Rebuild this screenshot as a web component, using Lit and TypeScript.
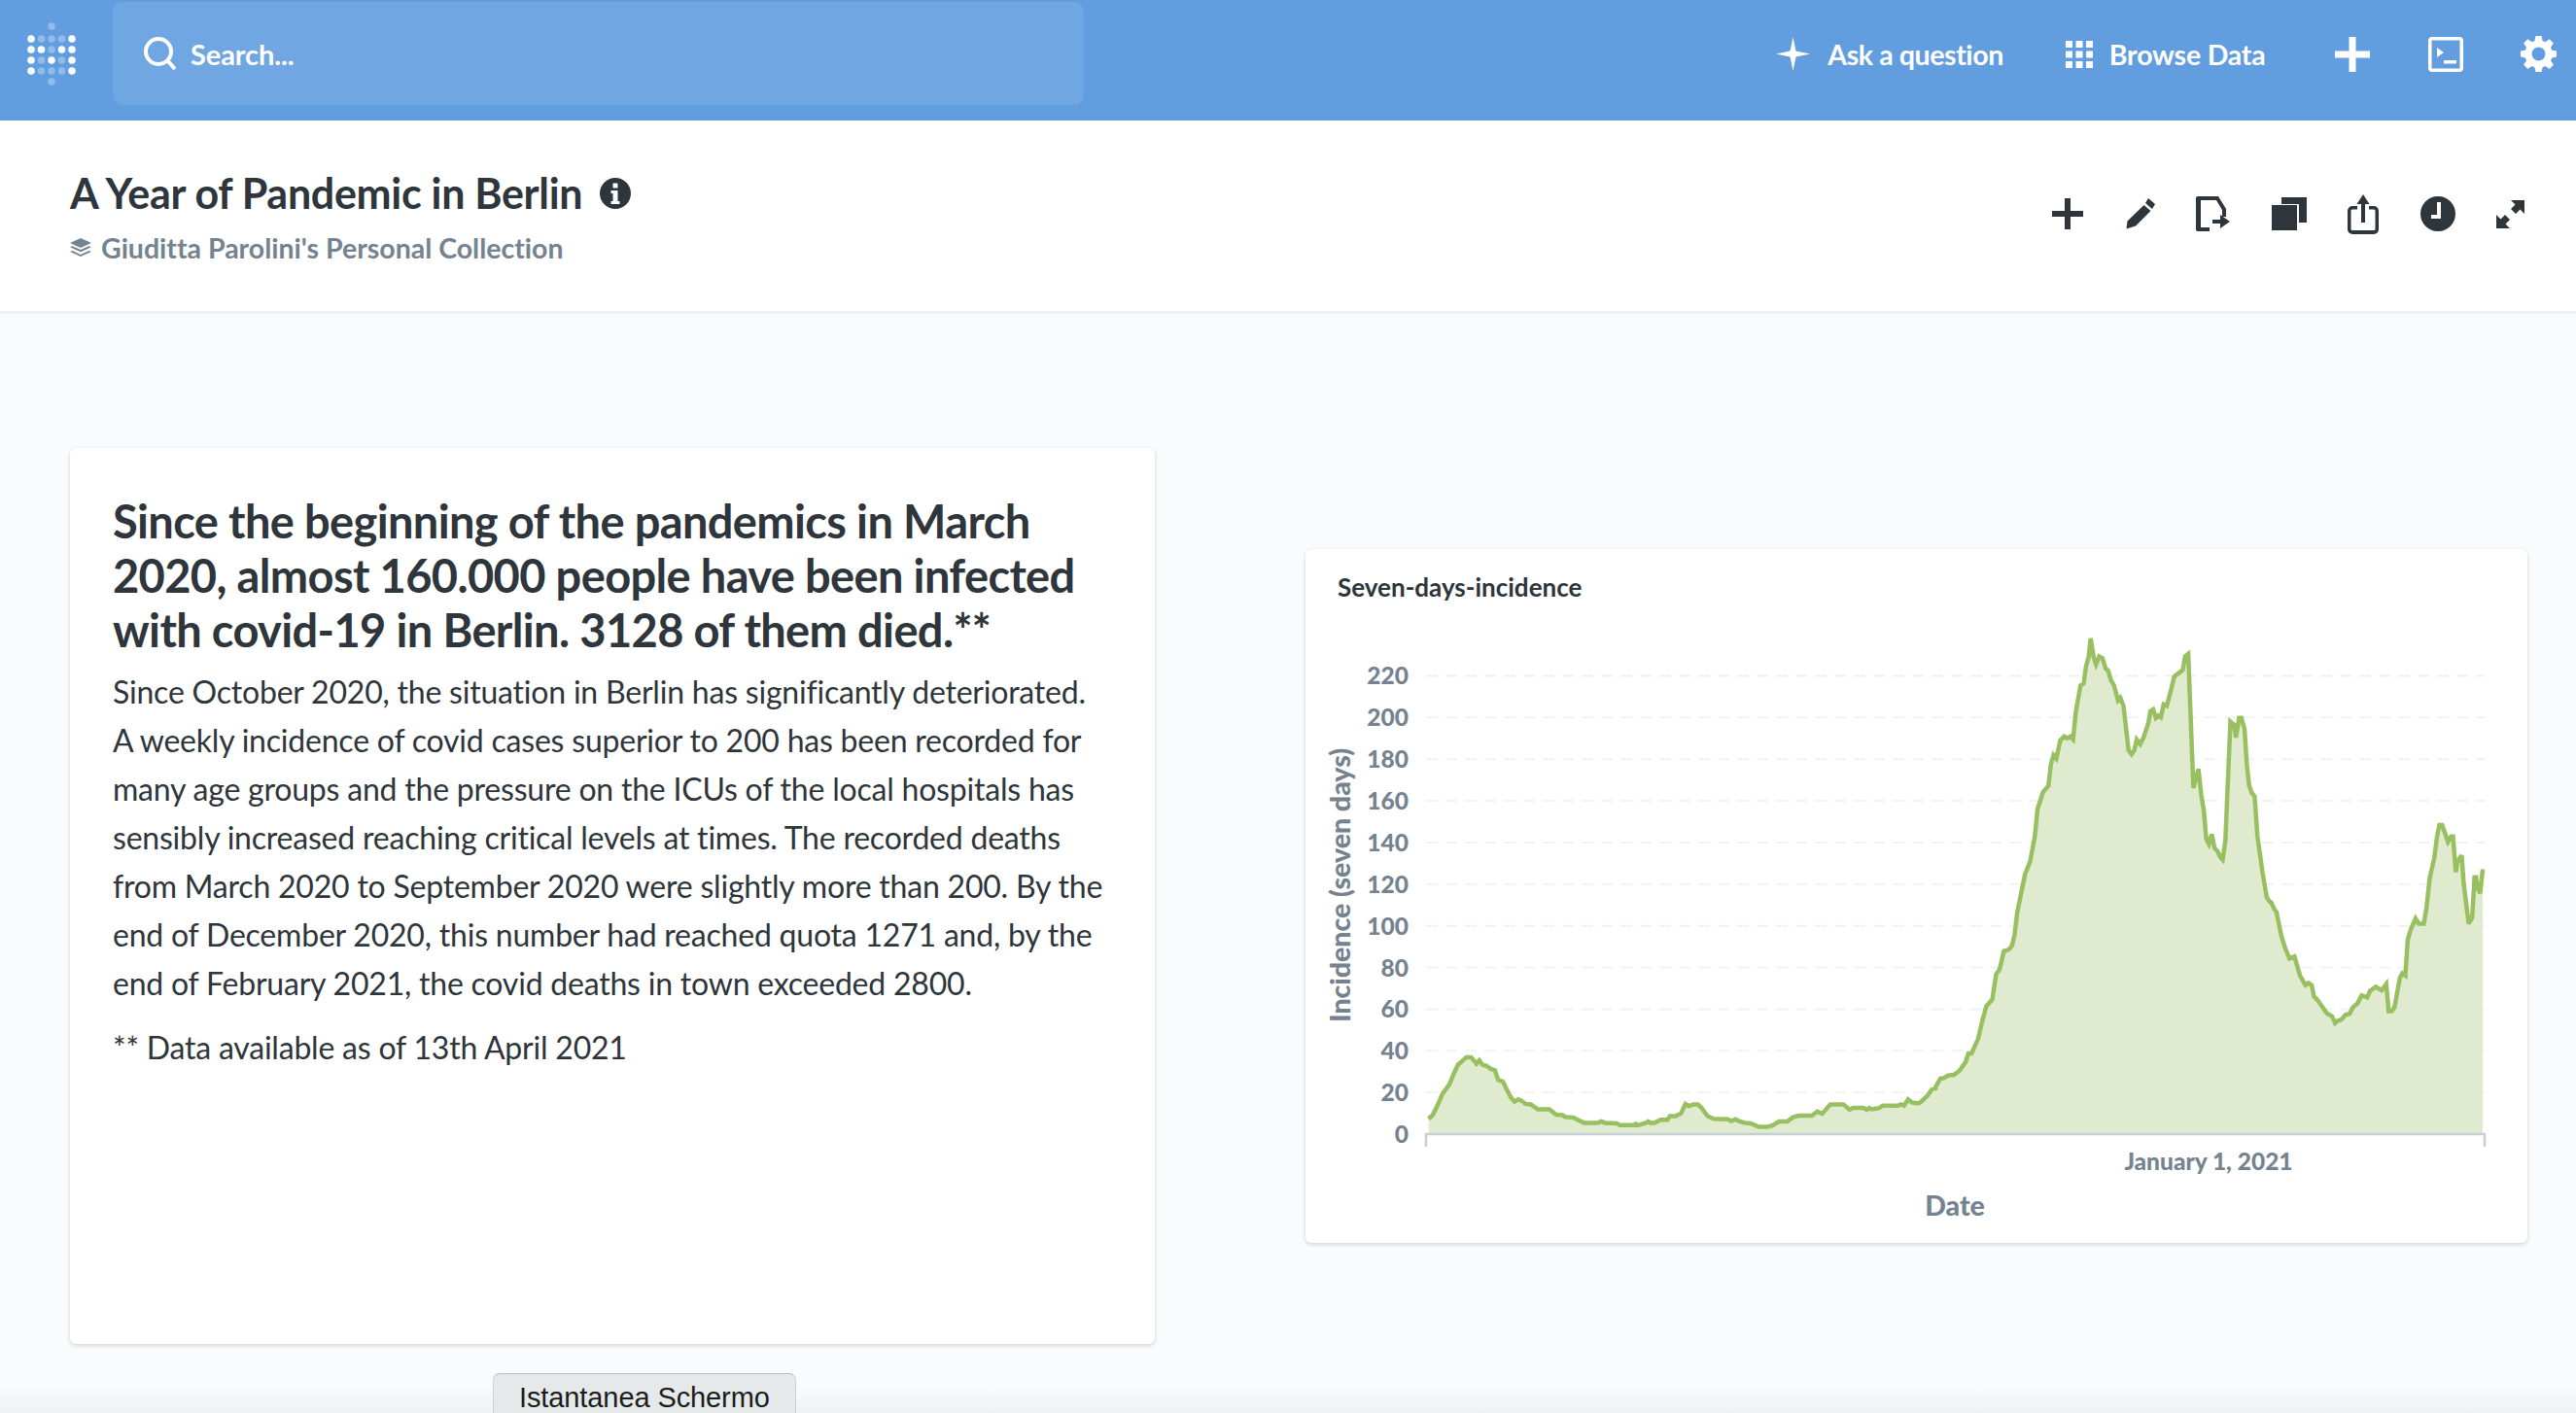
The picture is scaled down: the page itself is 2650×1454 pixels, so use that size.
import { LitElement, css, html, svg } from 'lit';
import { customElement } from 'lit/decorators.js';

// traced from the reference, [x, y] in page pixels after toPage()
const LEFT: number[][] = [[308,1270],[318,1262],[330,1240],[342,1215],[358,1195],[370,1170],[380,1150],[390,1143],[400,1134],[412,1134],[425,1148],[432,1141],[440,1151],[450,1153],[460,1160],[470,1163],[478,1184],[490,1188],[500,1207],[510,1224],[518,1232],[527,1227],[535,1230],[545,1237],[558,1238],[575,1249],[603,1249],[620,1261],[635,1262],[642,1266],[662,1267],[672,1272],[688,1279],[722,1279],[730,1276],[740,1279],[768,1280],[775,1284],[810,1284],[815,1281],[820,1284],[840,1279],[845,1276],[850,1279],[860,1279],[875,1272],[892,1272],[898,1264],[912,1264],[925,1258],[936,1237],[945,1242],[955,1238],[966,1238],[975,1246],[990,1264],[1005,1270],[1040,1271],[1048,1275],[1058,1271],[1068,1276],[1082,1279],[1095,1280],[1115,1288],[1135,1288],[1150,1284],[1165,1276],[1185,1276],[1198,1267],[1212,1263],[1245,1263],[1258,1254],[1270,1259],[1290,1238],[1322,1238],[1337,1250],[1345,1246],[1370,1246],[1380,1250],[1385,1246],[1392,1249],[1410,1246],[1418,1241],[1455,1241],[1462,1238],[1470,1241],[1480,1227],[1490,1234],[1505,1236],[1512,1232],[1528,1218],[1538,1205],[1550,1201]];
const RIGHT: number[][] = [[0,1155],[15,1130],[25,1128],[35,1122],[50,1121],[65,1110],[80,1090],[87,1070],[95,1070],[112,1035],[122,995],[133,958],[148,942],[158,882],[167,870],[178,827],[190,824],[198,815],[205,790],[212,735],[222,690],[232,645],[245,615],[257,555],[264,490],[278,450],[292,435],[298,385],[305,362],[312,370],[322,328],[332,318],[340,322],[348,318],[355,325],[362,260],[374,197],[382,192],[388,152],[395,128],[400,85],[408,130],[414,147],[422,128],[430,132],[438,156],[445,162],[452,185],[460,197],[470,232],[476,226],[484,245],[497,350],[505,360],[512,350],[518,325],[527,336],[535,322],[548,285],[553,258],[560,254],[567,274],[574,268],[580,272],[587,242],[595,245],[605,210],[614,176],[622,170],[636,160],[642,128],[650,122],[663,440],[676,395],[683,455],[690,495],[696,560],[703,573],[710,550],[717,582],[725,590],[732,604],[738,610],[745,565],[758,283],[767,290],[772,320],[780,274],[786,274],[794,300],[800,385],[806,435],[813,452],[820,460],[827,555],[840,640],[851,700],[857,708],[863,713],[870,727],[876,735],[888,790],[898,820],[909,845],[922,840],[936,885],[950,908],[958,903],[966,908],[972,935],[980,942],[1005,975],[1018,982],[1026,998],[1033,992],[1042,990],[1053,978],[1063,976],[1072,960],[1083,952],[1094,932],[1108,937],[1115,922],[1130,912],[1145,920],[1157,905],[1163,970],[1171,970],[1178,960],[1192,890],[1198,880],[1206,885],[1212,800],[1220,775],[1232,750],[1240,762],[1253,762],[1260,725],[1268,655],[1280,605],[1287,555],[1293,528],[1300,528],[1315,568],[1323,555],[1328,555],[1335,640],[1339,615],[1350,600],[1355,665],[1368,762],[1377,748],[1383,652],[1387,652],[1390,675],[1397,690],[1404,633]];

// the svg starts at this page position
const OX = 1343;
const OY = 640;
const BASE = 1167 - OY;
const AX0 = 1467 - OX;
const AX1 = 2556 - OX;

const points = [
  ...LEFT.map(([x, y]) => [1340 + x / 2.376 - OX, 560 + y / 2.148 - OY]),
  ...RIGHT.map(([x, y]) => [1990 + x / 2.489 - OX, 620 + y / 2.306 - OY]),
].map(([x, y]) => `${x.toFixed(1)},${y.toFixed(1)}`);

const TICKS = [0, 20, 40, 60, 80, 100, 120, 140, 160, 180, 200, 220];

@customElement('line-chart')
export class LineChart extends LitElement {
  render() {
    const line = points.join(' ');
    const first = points[0].split(',')[0];
    const last = points[points.length - 1].split(',')[0];
    return html`
      <svg width="1257" height="639" viewBox="0 0 1257 639">
        ${TICKS.map((t) => {
          const y = BASE - t * 2.1432;
          return svg`
            ${t > 0 ? svg`<line class="grid" x1=${AX0} x2=${AX1} y1=${y} y2=${y}></line>` : ''}
            <text class="tick" x="106" y=${y + 9} text-anchor="end">${t}</text>
          `;
        })}
        <polygon class="area" points="${first},${BASE} ${line} ${last},${BASE}"></polygon>
        <polyline class="line" points=${line}></polyline>
        <path class="axis" d="M${AX0} ${BASE + 13}V${BASE}H${AX1}V${BASE + 13}"></path>
        <text class="tick" x="929" y=${1204 - OY} text-anchor="middle">January 1, 2021</text>
        <text class="label" x="668" y=${1251 - OY} text-anchor="middle">Date</text>
        <text class="label" transform="translate(46 ${911 - OY}) rotate(-90)" text-anchor="middle">Incidence (seven days)</text>
      </svg>
    `;
  }

  static styles = css`
    :host {
      display: block;
    }
    svg {
      display: block;
    }
    text {
      font-family: Lato, sans-serif;
      font-weight: 900;
      fill: #74838f;
      font-variant-ligatures: none;
    }
    .tick {
      font-size: 24.500px;
    }
    .label {
      font-size: 28.500px;
    }
    .grid {
      stroke: #f1f2f3;
      stroke-width: 2;
      stroke-dasharray: 12 8;
    }
    .area {
      fill: #dfeacf;
    }
    .line {
      fill: none;
      stroke: #98c061;
      stroke-width: 4.500;
      stroke-linejoin: miter;
      stroke-miterlimit: 3;
    }
    .axis {
      fill: none;
      stroke: #c6cfd2;
      stroke-width: 2.500;
    }
  `;
}

const LOGO_DOTS = [
  [53, 27, 0], [32, 40, 1], [42.5, 40, 0], [53, 40, 0], [63.5, 40, 0], [74, 40, 1],
  [32, 51, 1], [42.5, 51, 1], [53, 51, 0], [63.5, 51, 1], [74, 51, 1],
  [32, 62, 1], [42.5, 62, 0], [53, 62, 1], [63.5, 62, 0], [74, 62, 1],
  [32, 73, 1], [42.5, 73, 0], [53, 73, 0], [63.5, 73, 0], [74, 73, 1], [53, 84, 0],
];

@customElement('app-root')
export class AppRoot extends LitElement {
  render() {
    return html`
      <nav class="nav">
        <svg class="logo" width="106" height="100" viewBox="0 0 106 100">
          ${LOGO_DOTS.map(([x, y, on]) => svg`<circle cx=${x} cy=${y} r="3.8" fill="#fff" opacity=${on ? 1 : 0.3}></circle>`)}
        </svg>
        <div class="search">
          <svg width="34" height="34" viewBox="0 0 34 34" fill="none" stroke="#fff" stroke-width="4">
            <circle cx="15" cy="15" r="13"></circle>
            <path d="M24 24l8 9"></path>
          </svg>
          <span>Search...</span>
        </div>
        <div class="nav-links">
          <a class="ask">
            <svg width="35" height="35" viewBox="0 0 35 35" fill="#fff"><path d="M17.5 0l3 14.500 14.500 3-14.500 3-3 14.500-3-14.500-14.500-3 14.500-3z"></path></svg>
            Ask a question
          </a>
          <a class="browse">
            <svg width="28" height="28" viewBox="0 0 28 28" fill="#fff">
              ${[0, 10.5, 21].flatMap((y) => [0, 10.5, 21].map((x) => svg`<rect x=${x} y=${y} width="7" height="7"></rect>`))}
            </svg>
            Browse Data
          </a>
          <svg class="nav-plus" width="36" height="36" viewBox="0 0 36 36" fill="#fff"><path d="M14.500 0h7v14.500h14.500v7h-14.500v14.500h-7v-14.500h-14.500v-7h14.500z"></path></svg>
          <svg class="nav-term" width="36" height="36" viewBox="0 0 36 36">
            <path fill="#fff" fill-rule="evenodd" d="M4 0h28a4 4 0 0 1 4 4v28a4 4 0 0 1-4 4h-28a4 4 0 0 1-4-4v-28a4 4 0 0 1 4-4zM3.500 3.500v29h29v-29z"></path>
            <path fill="#fff" d="M9 11l7 5-7 5zM16 24h13v3.500h-13z"></path>
          </svg>
          <svg class="nav-gear" width="37" height="37" viewBox="0 0 24 24">
            <path fill="#fff" fill-rule="evenodd" d="M10 0h4l.6 3.200 1.900.8 2.700-1.900 2.800 2.800-1.900 2.700.8 1.900 3.100.5v4l-3.100.6-.8 1.900 1.900 2.700-2.800 2.800-2.700-1.900-1.900.8-.6 3.100h-4l-.6-3.100-1.900-.8-2.700 1.900-2.800-2.800 1.900-2.700-.8-1.900-3.100-.6v-4l3.100-.5.8-1.900-1.900-2.700 2.800-2.800 2.700 1.900 1.900-.8zM12 7.500a4.500 4.500 0 1 0 0 9 4.500 4.500 0 0 0 0-9z"></path>
          </svg>
        </div>
      </nav>

      <header class="header">
        <div>
          <div class="title-row">
            <h1>A Year of Pandemic in Berlin</h1>
            <svg width="32" height="32" viewBox="0 0 32 32">
              <path fill="#2e353b" fill-rule="evenodd" d="M16 0a16 16 0 1 1 0 32 16 16 0 0 1 0-32zM13.500 5.500v5h5v-5zM11.500 13v3h2v8h-2v3h9v-3h-2v-11z"></path>
            </svg>
          </div>
          <div class="collection">
            <svg width="22" height="21" viewBox="0 0 22 21" fill="#74838f">
              <path d="M11 0l11 5-11 5-11-5zM2.500 8.200l8.500 3.900 8.500-3.900 2.500 1.100-11 5-11-5zM2.500 13l8.500 3.900 8.500-3.900 2.500 1.100-11 5-11-5z"></path>
            </svg>
            Giuditta Parolini's Personal Collection
          </div>
        </div>
        <div class="tools">
          <svg width="32" height="32" viewBox="0 0 32 32"><path d="M13 0h6v13h13v6h-13v13h-6v-13h-13v-6h13z"></path></svg>
          <svg width="31" height="32" viewBox="0 0 31 32"><path d="M24 0l7 6-3 5-7-6zM19.500 7l7 6-15.500 15.500-9.500 3 1-8z"></path></svg>
          <svg width="35" height="36" viewBox="0 0 35 36"><path fill-rule="evenodd" d="M2 0h21l8 13v8h-4v-7l-6-10h-16v28h9v4h-12a2 2 0 0 1-2-2v-32a2 2 0 0 1 2-2z"></path><path d="M17 24h8v-5l10 7-10 7v-5h-8z"></path></svg>
          <svg width="36" height="34" viewBox="0 0 36 34"><path d="M10 0h26v26h-8v-19h-18zM0 8h26v26h-26z"></path></svg>
          <svg width="32" height="41" viewBox="0 0 32 41"><path d="M16 0l6.500 10h-4.500v19h-4v-19h-4.500z"></path><path d="M10 12v3.500h-5a1.500 1.500 0 0 0-1.500 1.500v18.500a1.500 1.500 0 0 0 1.500 1.500h22a1.500 1.500 0 0 0 1.500-1.500v-18.500a1.500 1.500 0 0 0-1.500-1.500h-5v-3.500h5a5 5 0 0 1 5 5v19a5 5 0 0 1-5 5h-22a5 5 0 0 1-5-5v-19a5 5 0 0 1 5-5z"></path></svg>
          <svg width="36" height="36" viewBox="0 0 36 36"><path fill-rule="evenodd" d="M18 0a18 18 0 1 1 0 36 18 18 0 0 1 0-36zM17 6v13h-6v4h10v-17z"></path></svg>
          <svg width="29" height="29" viewBox="0 0 29 29"><path d="M15 0h14v14l-4.500-4.500-4.500 4.500-5-5 4.500-4.500zM14 20l-4.500 4.500 4.500 4.500h-14v-14l4.500 4.500 4.500-4.500z"></path></svg>
        </div>
      </header>

      <main class="dashboard">
        <section class="card text-card">
          <h2>Since the beginning of the pandemics in March 2020, almost 160.000 people have been infected with covid-19 in Berlin. 3128 of them died.**</h2>
          <p>Since October 2020, the situation in Berlin has significantly deteriorated. A weekly incidence of covid cases superior to 200 has been recorded for many age groups and the pressure on the ICUs of the local hospitals has sensibly increased reaching critical levels at times. The recorded deaths from March 2020 to September 2020 were slightly more than 200. By the end of December 2020, this number had reached quota 1271 and, by the end of February 2021, the covid deaths in town exceeded 2800.</p>
          <p class="note">** Data available as of 13th April 2021</p>
        </section>
        <section class="card chart-card">
          <div class="chart-title">Seven-days-incidence</div>
          <line-chart></line-chart>
        </section>
      </main>

      <div class="fade"></div>
      <div class="snapshot">Istantanea Schermo</div>
    `;
  }

  static styles = css`
    :host {
      display: block;
      position: relative;
      height: 1454px;
      overflow: hidden;
      background: #f9fbfc;
      font-family: Lato, sans-serif;
      color: #2e353b;
      font-variant-ligatures: none;
    }

    .nav {
      display: flex;
      align-items: flex-start;
      height: 124px;
      background: #629edf;
      color: #fff;
      padding-right: 20px;
      box-sizing: border-box;
    }
    .logo {
      flex: none;
      width: 106px;
      margin-right: 10px;
    }
    .search {
      display: flex;
      align-items: center;
      gap: 14px;
      width: 999px;
      height: 106px;
      margin-top: 2px;
      padding-left: 32px;
      box-sizing: border-box;
      background: #70a6e2;
      border-radius: 10px;
      font-size: 29px;
      font-weight: 700;
      letter-spacing: -0.100px;
    }
    .nav-links {
      display: flex;
      align-items: center;
      height: 111px;
      margin-left: auto;
      font-size: 28.500px;
      font-weight: 700;
      letter-spacing: -0.200px;
    }
    .nav-links a {
      display: flex;
      align-items: center;
    }
    .ask {
      gap: 18px;
      letter-spacing: -0.400px;
    }
    .browse {
      gap: 17px;
      margin-left: 64px;
    }
    .nav-plus {
      margin-left: 71.500px;
    }
    .nav-term {
      margin-left: 60px;
    }
    .nav-gear {
      margin-left: 59px;
    }

    .header {
      display: flex;
      align-items: center;
      justify-content: space-between;
      height: 199px;
      box-sizing: border-box;
      padding: 0 53px 0 72px;
      background: #fff;
      border-bottom: 3px solid #eff0f1;
    }
    .title-row {
      display: flex;
      align-items: center;
      gap: 18px;
      margin-top: 2px;
    }
    h1 {
      margin: 0;
      font-size: 43px;
      font-weight: 700;
      line-height: 50px;
      letter-spacing: -0.300px;
    }
    .collection {
      display: flex;
      align-items: center;
      gap: 10px;
      margin-top: 14px;
      font-size: 28.500px;
      font-weight: 700;
      color: #74838f;
    }
    .tools {
      display: flex;
      align-items: center;
      gap: 42.500px;
      margin-top: -4px;
    }
    .tools svg {
      fill: #2e353b;
    }

    .dashboard {
      display: grid;
      grid-template-columns: 1116px 1257px;
      column-gap: 155px;
      align-items: start;
      padding: 138px 0 0 72px;
    }
    .card {
      background: #fff;
      border-radius: 6px;
      box-shadow: 0 2px 4px rgba(46, 53, 59, 0.16), 0 0 2px rgba(46, 53, 59, 0.08);
      box-sizing: border-box;
    }
    .text-card {
      height: 922px;
      padding: 47px 44px 0;
    }
    h2 {
      margin: 0 0 11px;
      font-size: 47px;
      font-weight: 700;
      line-height: 56px;
      letter-spacing: -0.640px;
    }
    p {
      margin: 0;
      font-size: 32px;
      line-height: 50px;
      letter-spacing: -0.210px;
    }
    .note {
      margin-top: 16px;
    }
    .chart-card {
      height: 714px;
      margin-top: 104px;
    }
    .chart-title {
      height: 75px;
      padding: 22px 0 0 33px;
      box-sizing: border-box;
      font-size: 26px;
      font-weight: 700;
      line-height: 34px;
    }

    .fade {
      position: absolute;
      left: 0;
      right: 0;
      bottom: 0;
      height: 30px;
      background: linear-gradient(rgba(235, 238, 240, 0), rgba(235, 238, 240, 0.7));
    }
    .snapshot {
      position: absolute;
      left: 507px;
      top: 1413px;
      width: 312px;
      height: 41px;
      box-sizing: border-box;
      padding: 9px 0 0 26px;
      background: #e6e9ea;
      border: 1px solid #cfd2d4;
      border-top-color: #b9bcbe;
      border-bottom: none;
      border-radius: 7px 7px 0 0;
      font-family: 'Liberation Sans', Arial, sans-serif;
      font-size: 29px;
      letter-spacing: -0.100px;
      line-height: 31px;
      color: #1c1c1c;
    }
  `;
}

declare global {
  interface HTMLElementTagNameMap {
    'app-root': AppRoot;
    'line-chart': LineChart;
  }
}
